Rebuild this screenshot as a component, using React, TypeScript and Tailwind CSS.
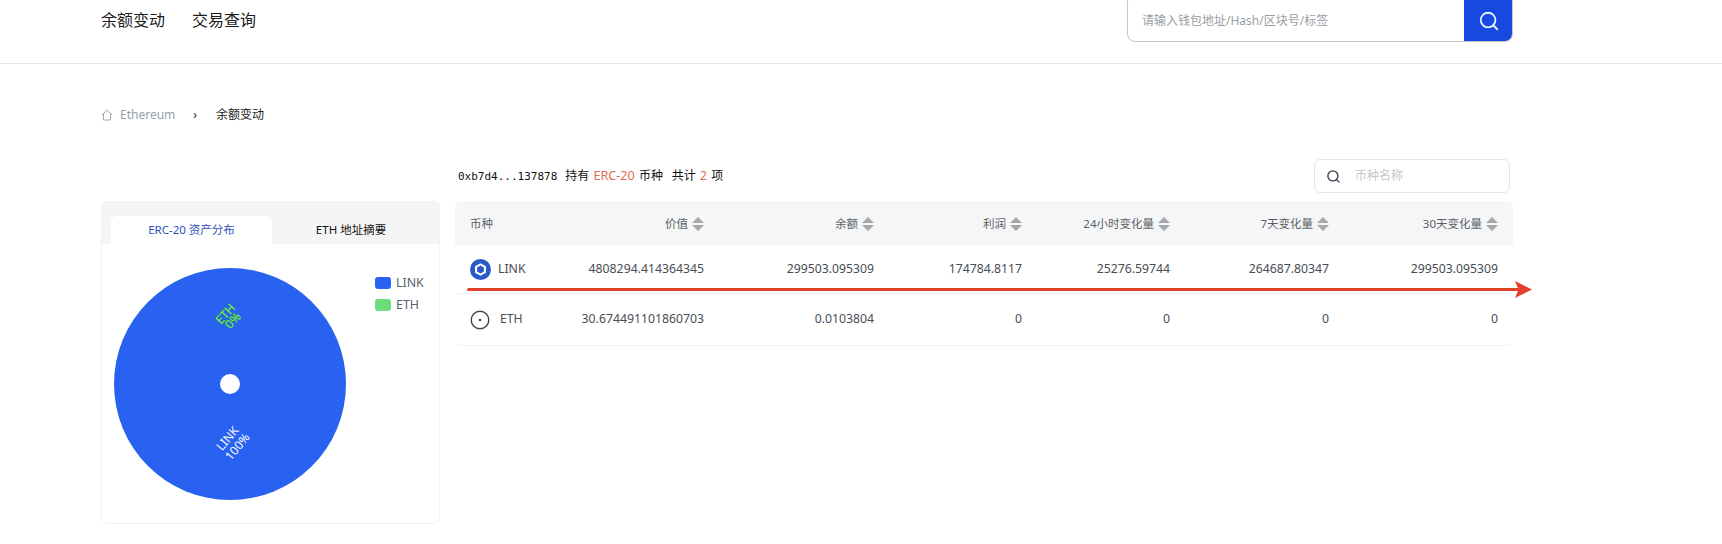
import { Search } from "lucide-react";

const fontStack = "font-['Noto_Sans','Noto_Sans_CJK_SC',sans-serif]";
const columns = "grid grid-cols-[100px_134px_170px_148px_148px_159px_169px] items-center pl-[15px]";

const headers = ["价值", "余额", "利润", "24小时变化量", "7天变化量", "30天变化量"];

const rows = [
  {
    symbol: "LINK",
    height: "h-[48px]",
    values: ["4808294.414364345", "299503.095309", "174784.8117", "25276.59744", "264687.80347", "299503.095309"],
  },
  {
    symbol: "ETH",
    height: "h-[51px]",
    values: ["30.674491101860703", "0.0103804", "0", "0", "0", "0"],
  },
];

function SortIcon() {
  return (
    <svg width="12" height="14" viewBox="0 0 12 14" className="ml-[4px] shrink-0" aria-hidden="true">
      <path d="M6 0 12 6H0Z M0 8H12L6 14Z" fill="#a8a8a8" />
    </svg>
  );
}

function LinkLogo() {
  return (
    <svg width="21" height="21" viewBox="0 0 21 21" aria-hidden="true">
      <circle cx="10.5" cy="10.5" r="10.5" fill="#2a5ac8" />
      <path d="M10.5 4.2 16 7.35v6.3L10.5 16.8 5 13.65v-6.3Z" fill="#ffffff" />
      <path d="M10.5 6.6 13.9 8.55v3.9l-3.4 1.95-3.4-1.95v-3.9Z" fill="#2a5ac8" />
    </svg>
  );
}

function EthLogo() {
  return (
    <svg width="20" height="20" viewBox="0 0 20 20" aria-hidden="true">
      <circle cx="10" cy="10" r="8.8" fill="none" stroke="#44464d" strokeWidth="1.4" />
      <circle cx="10" cy="10" r="1.3" fill="#44464d" />
    </svg>
  );
}

function PieChart() {
  return (
    <svg width="232" height="232" viewBox="0 0 232 232" aria-label="ERC-20 资产分布">
      <circle cx="116" cy="116" r="116" fill="#2962f0" />
      <circle cx="116" cy="116" r="10" fill="#ffffff" />
      <g
        transform="translate(116 50) rotate(-48)"
        textAnchor="middle"
        fontSize="12"
        fontFamily="'Noto Sans', sans-serif"
        fill="#7be58a"
        stroke="#1f8a5c"
        strokeWidth="1"
        paintOrder="stroke"
      >
        <text y="-2">ETH</text>
        <text y="8">0%</text>
      </g>
      <g
        transform="translate(119 175) rotate(-50)"
        textAnchor="middle"
        fontSize="12"
        fill="#ffffff"
        fontFamily="'Noto Sans', sans-serif"
      >
        <text y="-3">LINK</text>
        <text y="10">100%</text>
      </g>
    </svg>
  );
}

export default function App() {
  return (
    <div className={`${fontStack} relative h-[544px] w-full overflow-hidden bg-white`}>
      <header className="flex h-[64px] items-start justify-between border-b border-[#e6e7e9] pl-[101px] pr-[209px]">
        <nav className="flex gap-[27px] pt-[8px] text-[16px] leading-[24px] text-[#1c1c1c]">
          <span>余额变动</span>
          <span>交易查询</span>
        </nav>
        <div className="-mt-[6px] flex h-[48px] w-[386px] overflow-hidden rounded-[8px] border border-[#c4c6ca] bg-white">
          <div className="flex flex-1 items-center pl-[14px] pt-[6px] text-[12px] text-[#9a9da3]">
            请输入钱包地址/Hash/区块号/标签
          </div>
          <div className="-my-px -mr-px flex w-[49px] items-center justify-center bg-[#1748e0] pt-[6px]">
            <Search size={22} color="#e8eefc" strokeWidth={2} aria-hidden="true" />
          </div>
        </div>
      </header>

      <div className="flex h-[59px] items-end pl-[101px] text-[12px] leading-[16px]">
        <div className="flex items-center">
          <svg width="12" height="12" viewBox="0 0 12 12" aria-hidden="true">
            <path d="M1 6 6 1.2 11 6M2.5 5v6h7V5" fill="none" stroke="#a3a8ae" strokeWidth="1" />
          </svg>
          <span className="ml-[7px] text-[#93a0ad]">Ethereum</span>
          <span className="ml-[18px] text-[#222222]">›</span>
          <span className="ml-[19px] text-[#1c1c1c]">余额变动</span>
        </div>
      </div>

      <main className="flex items-start gap-[15px] pl-[101px] pr-[209px] pt-[36px]">
        <section className="mt-[42px] h-[323px] w-[339px] shrink-0 overflow-hidden rounded-[6px] border border-[#f2f2f2] bg-white">
          <div className="flex h-[42px] items-end bg-[#f5f5f5] pl-[9px] text-[11.5px]">
            <div className="flex h-[28px] w-[161px] items-center justify-center rounded-t-[6px] bg-white text-[#2b50bd]">
              ERC-20 资产分布
            </div>
            <div className="flex h-[28px] w-[158px] items-center justify-center text-[#111111]">ETH 地址摘要</div>
          </div>
          <div className="relative flex">
            <div className="ml-[12px] mt-[24px]">
              <PieChart />
            </div>
            <ul className="ml-[29px] mt-[30px] flex flex-col gap-[4px] text-[12.4px] leading-[18px] text-[#5b6070]">
              <li className="flex items-center gap-[5px]">
                <span className="h-[12px] w-[16px] rounded-[3px] bg-[#2962f0]" />
                LINK
              </li>
              <li className="flex items-center gap-[5px]">
                <span className="h-[12px] w-[16px] rounded-[3px] bg-[#6fdc7c]" />
                ETH
              </li>
            </ul>
          </div>
        </section>

        <section className="flex-1">
          <div className="flex h-[34px] items-center justify-between pr-[3px]">
            <p className="ml-[3px] text-[12px] text-[#111111] [word-spacing:1.2px]">
              <span className="font-['DejaVu_Sans_Mono',monospace] text-[11px]">0xb7d4...137878 </span>
              持有 <span className="text-[12.6px] text-[#dd6a4d]">ERC-20</span> 币种&nbsp; 共计{" "}
              <span className="text-[#dd6a4d]">2</span> 项
            </p>
            <div className="flex h-[34px] w-[196px] items-center rounded-[6px] border border-[#e4e5e8] pl-[11px] text-[12px] text-[#c4c6ca]">
              <Search size={15} color="#3f4350" strokeWidth={2.2} aria-hidden="true" />
              <span className="ml-[14px]">币种名称</span>
            </div>
          </div>

          <div className="mt-[8px] overflow-hidden rounded-[6px] border-b border-[#f1f1f2] bg-white">
            <div className={`${columns} h-[45px] bg-[#f5f6f7] text-[11.5px] text-[#5c5f66]`}>
              <div>币种</div>
              {headers.map((label) => (
                <div key={label} className="flex items-center justify-end">
                  {label}
                  <SortIcon />
                </div>
              ))}
            </div>
            {rows.map((row) => (
              <div
                key={row.symbol}
                className={`${columns} ${row.height} border-b border-[#f3f3f4] text-[12.25px] text-[#4a4d55] last:border-b-0`}
              >
                <div className="flex items-center gap-[7px]">
                  {row.symbol === "LINK" ? <LinkLogo /> : <EthLogo />}
                  <span className={row.symbol === "ETH" ? "ml-[3px]" : ""}>{row.symbol}</span>
                </div>
                {row.values.map((value, i) => (
                  <div key={i} className="text-right">
                    {value}
                  </div>
                ))}
              </div>
            ))}
          </div>
        </section>
      </main>

      {/* hand-drawn annotation lying over the table */}
      <div className="absolute left-[467px] top-[288px] h-[3px] w-[1052px] rounded-full bg-[#e2412a]" />
      <svg className="absolute left-[1515px] top-[281px]" width="17" height="17" viewBox="0 0 17 17" aria-hidden="true">
        <path d="M0 0 17 8.5 0 17 3.5 8.5Z" fill="#e2412a" />
      </svg>
    </div>
  );
}
